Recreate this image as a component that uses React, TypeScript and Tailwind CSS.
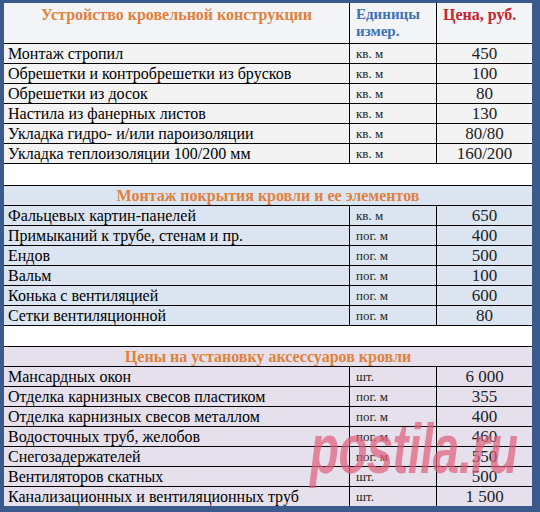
const section1 = [
  ['Монтаж стропил', 'кв. м', '450'],
  ['Обрешетки и контробрешетки из брусков', 'кв. м', '100'],
  ['Обрешетки из досок', 'кв. м', '80'],
  ['Настила из фанерных листов', 'кв. м', '130'],
  ['Укладка гидро- и/или пароизоляции', 'кв. м', '80/80'],
  ['Укладка теплоизоляции 100/200 мм', 'кв. м', '160/200'],
];

const section2 = [
  ['Фальцевых картин-панелей', 'кв. м', '650'],
  ['Примыканий к трубе, стенам и пр.', 'пог. м', '400'],
  ['Ендов', 'пог. м', '500'],
  ['Вальм', 'пог. м', '100'],
  ['Конька с вентиляцией', 'пог. м', '600'],
  ['Сетки вентиляционной', 'пог. м', '80'],
];

const section3 = [
  ['Мансардных окон', 'шт.', '6 000'],
  ['Отделка карнизных свесов пластиком', 'пог. м', '355'],
  ['Отделка карнизных свесов металлом', 'пог. м', '400'],
  ['Водосточных труб, желобов', 'пог. м', '460'],
  ['Снегозадержателей', 'пог. м', '550'],
  ['Вентиляторов скатных', 'шт.', '500'],
  ['Канализационных и вентиляционных труб', 'шт.', '1 500'],
];

function Row({ row, bg }: { row: string[]; bg: string }) {
  return (
    <div className={`grid grid-cols-[345px_87px_96px] h-[20px] border-t border-black ${bg}`}>
      <div className="pl-[4px] text-[16px] leading-[19px] text-black whitespace-nowrap">{row[0]}</div>
      <div className="border-l border-black pl-[6px] text-[13px] leading-[19px] text-[#222]">{row[1]}</div>
      <div className="border-l border-black text-center text-[17px] leading-[19px] text-[#222]">{row[2]}</div>
    </div>
  );
}

function SectionTitle({ text, bg }: { text: string; bg: string }) {
  return (
    <div className={`h-[20px] border-t border-black text-center font-bold text-[16px] leading-[19px] text-[#e0813c] ${bg}`}>
      {text}
    </div>
  );
}

export default function App() {
  return (
    <div className="relative w-[540px] h-[512px] bg-[#3b5b8c] pl-[4px] pt-[3px] pr-[8px] overflow-hidden font-['Liberation_Serif','Times_New_Roman',serif]">
      <div className="w-[528px] bg-white">
        <div className="grid grid-cols-[345px_87px_96px] h-[40px] bg-[#f2f4f7]">
          <div className="text-center font-bold text-[16px] leading-[18px] pt-[3px] text-[#e0813c]">
            Устройство кровельной конструкции
          </div>
          <div className="border-l border-black pl-[6px] pt-[3px] font-bold text-[15px] leading-[17px] text-[#3d72b4]">
            Единицы
            <br />
            измер.
          </div>
          <div className="border-l border-black pl-[6px] pt-[3px] font-bold text-[16px] leading-[17px] text-[#c4262e] whitespace-nowrap">
            Цена, руб.
          </div>
        </div>
        {section1.map((r) => (
          <Row key={r[0]} row={r} bg="bg-[#f3f3f3]" />
        ))}
        <div className="h-[22px] border-t border-black bg-white" />
        <SectionTitle text="Монтаж покрытия кровли и ее элементов" bg="bg-[#dbe5f1]" />
        {section2.map((r) => (
          <Row key={r[0]} row={r} bg="bg-[#dbe5f1]" />
        ))}
        <div className="h-[21px] border-t border-black bg-white" />
        <SectionTitle text="Цены на установку аксессуаров кровли" bg="bg-[#e5e0ec]" />
        {section3.map((r) => (
          <Row key={r[0]} row={r} bg="bg-[#e5e0ec]" />
        ))}
      </div>
      <div className="absolute left-[310px] top-[414px] text-[70px] leading-none font-bold italic text-[#e25d7c]/70 scale-x-[0.68] origin-left tracking-[-1px] pointer-events-none font-['Liberation_Sans',Arial,sans-serif]">
        postila.ru
      </div>
    </div>
  );
}
